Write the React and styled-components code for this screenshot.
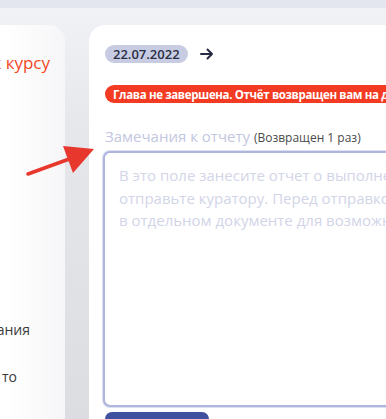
import React from 'react';
import styled, { createGlobalStyle } from 'styled-components';

const GlobalStyle = createGlobalStyle`
  html, body {
    margin: 0;
    padding: 0;
    width: 386px;
    height: 419px;
    overflow: hidden;
    font-family: "Open Sans", "Noto Sans", sans-serif;
  }
`;

const TopBar = styled.div`
  height: 8px;
  background: #e3e6ee;
`;

const Main = styled.div`
  display: flex;
  gap: 24px;
  height: 411px;
  padding-top: 17px;
  box-sizing: border-box;
  background: linear-gradient(180deg, #f1f2f6 0%, #e6e7eb 30%, #dcdde1 100%);
`;

const SideCard = styled.aside`
  flex: none;
  width: 200px;
  margin-left: -135px;
  border-radius: 0 16px 0 0;
  background: linear-gradient(90deg, #ffffff 70%, #f6f6f8 100%);
  display: flex;
  flex-direction: column;
  padding-top: 26px;
  box-sizing: border-box;
  overflow: hidden;
`;

const SideItem = styled.div`
  white-space: nowrap;
  text-align: right;
  padding-right: ${p => p.$right}px;
  margin-top: ${p => p.$top}px;
  font-size: ${p => (p.$accent ? 17 : 14)}px;
  color: ${p => (p.$accent ? '#f2461e' : '#3a3a3a')};
`;

const Card = styled.section`
  flex: none;
  width: 620px;
  background: #fff;
  border-radius: 16px 0 0 0;
  padding: 20px 0 0 16px;
  box-sizing: border-box;
  overflow: hidden;
`;

const DateRow = styled.div`
  display: flex;
  align-items: center;
  gap: 12px;
  height: 18px;
`;

const DatePill = styled.span`
  display: inline-flex;
  align-items: center;
  height: 18px;
  padding: 0 8px;
  border-radius: 9px;
  background: #c7cce3;
  color: #2a2e44;
  font-size: 13px;
  font-weight: 600;
`;

const Banner = styled.div`
  margin-top: 22px;
  height: 18px;
  display: flex;
  align-items: center;
  padding-left: 8px;
  border-radius: 9px 0 0 9px;
  background: #f23b22;
  color: #fff;
  font-size: 11.5px;
  font-weight: 700;
  white-space: nowrap;
  overflow: hidden;
  letter-spacing: -0.35px;
`;

const Label = styled.div`
  margin-top: 24px;
  font-size: 15px;
  color: #c3c7df;
  white-space: nowrap;
  line-height: 18px;
`;

const Note = styled.span`
  font-size: 12px;
  color: #4a4a4a;
`;

const TextArea = styled.textarea`
  display: block;
  margin: 4px 0 0 -2px;
  width: 610px;
  height: 256px;
  box-sizing: border-box;
  border: 2px solid #aeb5de;
  border-right: none;
  box-shadow: 0 0 0 1px #dde0ef;
  border-radius: 7px 0 0 7px;
  padding: 11px 14px;
  font-family: inherit;
  font-size: 15px;
  line-height: 22.5px;
  resize: none;
  outline: none;
  &::placeholder {
    color: #d2d5e8;
  }
`;

const Button = styled.button`
  margin-top: 5px;
  width: 104px;
  height: 30px;
  border: none;
  border-radius: 7px;
  background: #3f519e;
`;

const Pointer = styled.svg`
  position: absolute;
  left: 0;
  top: 0;
  pointer-events: none;
`;

const placeholder =
  'В это поле занесите отчет о выполнении задания и\n' +
  'отправьте куратору. Перед отправкой сохраните текст\n' +
  'в отдельном документе для возможности восстановления.';

export default function App() {
  return (
    <>
      <GlobalStyle />
      <TopBar />
      <Main>
        <SideCard>
          <SideItem $accent $right={15} $top={0}>Вернуться к курсу</SideItem>
          <SideItem $right={35} $top={246}>Описание задания</SideItem>
          <SideItem $right={48} $top={28}>Что то</SideItem>
        </SideCard>
        <Card>
          <DateRow>
            <DatePill>22.07.2022</DatePill>
            <svg width="14" height="14" viewBox="0 0 14 14" fill="none" stroke="#262a40" strokeWidth="2" strokeLinecap="round" strokeLinejoin="round">
              <path d="M1 7h11M7.5 2.5L12 7l-4.5 4.5" />
            </svg>
          </DateRow>
          <Banner>Глава не завершена. Отчёт возвращен вам на доработку.</Banner>
          <Label>
            Замечания к отчету <Note>(Возвращен 1 раз)</Note>
          </Label>
          <TextArea placeholder={placeholder} />
          <Button />
        </Card>
      </Main>
      <Pointer width="110" height="190">
        <line x1="28" y1="174" x2="72" y2="158" stroke="#e8382e" strokeWidth="3.5" strokeLinecap="round" />
        <polygon points="94,149 63,146 73,173" fill="#e8382e" />
      </Pointer>
    </>
  );
}
